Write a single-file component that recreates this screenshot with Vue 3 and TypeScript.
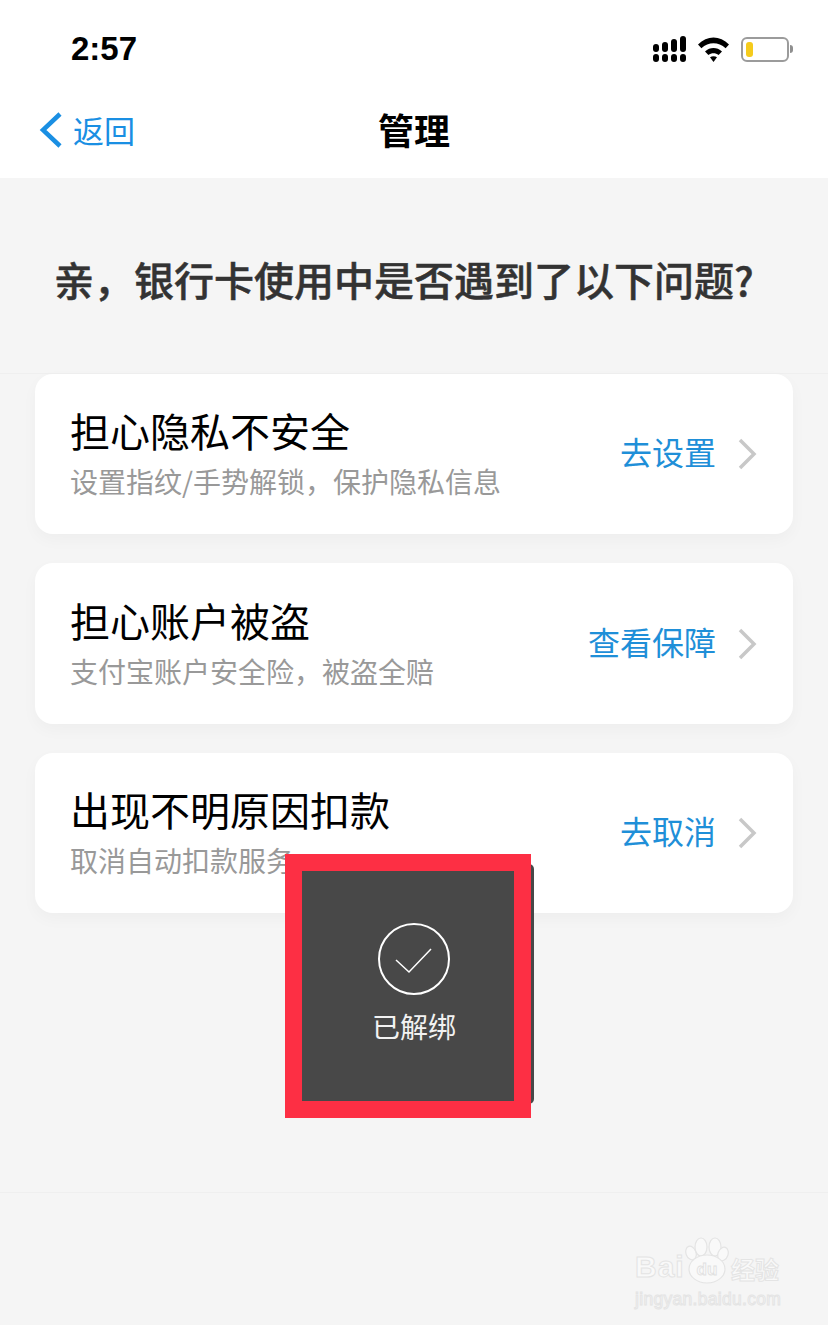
<script setup lang="ts">
const items = [
  { title: '担心隐私不安全', desc: '设置指纹/手势解锁，保护隐私信息', action: '去设置' },
  { title: '担心账户被盗', desc: '支付宝账户安全险，被盗全赔', action: '查看保障' },
  { title: '出现不明原因扣款', desc: '取消自动扣款服务', action: '去取消' },
]
const signalBars = [8, 10, 13, 16]
</script>

<template>
  <div class="page">
    <header class="top">
      <div class="status">
        <span class="time">2:57</span>
        <div class="status-icons">
          <div class="signal">
            <div v-for="h in signalBars" :key="h" class="signal-col">
              <i class="bar" :style="{ height: h + 'px' }"></i>
              <i class="dot"></i>
            </div>
          </div>
          <svg class="wifi" width="31" height="26" viewBox="0 0 31 26">
            <path d="M0 8.500C9-.8 22-.8 31 8.500l-3.400 3.700C20.500 5.500 10.500 5.500 3.400 12.200z" fill="#000" />
            <path d="M7 15.500c5-4.600 12-4.600 17 0l-3.400 3.500c-3-2.500-7.200-2.500-10.200 0z" fill="#000" />
            <path d="M12 21.300c2-1.500 5-1.500 7 0L15.500 26z" fill="#000" />
          </svg>
          <div class="battery">
            <div class="battery-body"><i class="battery-level"></i></div>
            <i class="battery-cap"></i>
          </div>
        </div>
      </div>
      <nav class="nav">
        <div class="back">
          <svg width="26" height="36" viewBox="0 0 26 36">
            <path d="M22 2 5 18l17 16" fill="none" stroke="#1a8fe3" stroke-width="4.500" />
          </svg>
          <span>返回</span>
        </div>
        <h1 class="nav-title">管理</h1>
      </nav>
    </header>

    <h2 class="heading">亲，银行卡使用中是否遇到了以下问题?</h2>

    <section class="list">
      <div v-for="item in items" :key="item.title" class="card">
        <div class="card-text">
          <div class="card-title">{{ item.title }}</div>
          <div class="card-desc">{{ item.desc }}</div>
        </div>
        <span class="card-action">{{ item.action }}</span>
        <svg class="chevron" width="20" height="32" viewBox="0 0 20 32">
          <path d="M3 2l14 14L3 30" fill="none" stroke="#c8c8c8" stroke-width="3.500" />
        </svg>
      </div>
    </section>

    <div class="footer-line"></div>

    <div class="toast-edge"></div>
    <div class="toast-mark">
      <div class="toast">
        <svg width="74" height="74" viewBox="0 0 74 74">
          <circle cx="37" cy="37" r="35" fill="none" stroke="#fff" stroke-width="2" />
          <path d="M19 38l13 12 22-23" fill="none" stroke="#fff" stroke-width="1.500" />
        </svg>
        <span class="toast-text">已解绑</span>
      </div>
    </div>

    <div class="watermark">
      <div class="wm-row">
        <span class="wm-bai">Bai</span>
        <svg class="wm-paw" width="44" height="47" viewBox="0 0 44 47">
          <g fill="#f9f9f9" stroke="#e4e4e4" stroke-width="1.200">
            <ellipse cx="6" cy="16" rx="5" ry="7" transform="rotate(-20 6 16)" />
            <ellipse cx="16" cy="10" rx="6" ry="9" />
            <ellipse cx="30" cy="10" rx="6" ry="9" />
            <ellipse cx="38" cy="17" rx="5" ry="7" transform="rotate(20 38 17)" />
            <ellipse cx="22" cy="32" rx="18" ry="14" />
          </g>
          <text x="22" y="38" text-anchor="middle" class="wm-du">du</text>
        </svg>
        <span class="wm-cn">经验</span>
      </div>
      <div class="wm-url">jingyan.baidu.com</div>
    </div>
  </div>
</template>

<style>
html,
body {
  margin: 0;
  background: #f5f5f5;
}
</style>

<style scoped>
.page {
  position: relative;
  width: 828px;
  height: 1325px;
  overflow: hidden;
  background: #f5f5f5;
  font-family: "Noto Sans CJK SC", "Liberation Sans", sans-serif;
}

.top {
  background: #fff;
  height: 178px;
}

.status {
  height: 90px;
  box-sizing: border-box;
  padding: 8px 35px 0 71px;
  display: flex;
  align-items: center;
  justify-content: space-between;
}

.time {
  font-family: "Liberation Sans", sans-serif;
  font-size: 33px;
  font-weight: 700;
  color: #000;
}

.status-icons {
  display: flex;
  align-items: center;
  gap: 12px;
}

.signal {
  display: flex;
  align-items: flex-end;
  gap: 3px;
}

.signal-col {
  display: flex;
  flex-direction: column;
  gap: 2px;
  width: 6px;
}

.bar {
  display: block;
  background: #000;
  border-radius: 3px;
}

.dot {
  display: block;
  height: 8px;
  background: #000;
  border-radius: 3px;
}

.battery {
  display: flex;
  align-items: center;
}

.battery-body {
  width: 48px;
  height: 25px;
  box-sizing: border-box;
  border: 2px solid #9b9b9b;
  border-radius: 6px;
  padding: 3px;
}

.battery-level {
  display: block;
  width: 7px;
  height: 100%;
  background: #f5cb1c;
  border-radius: 3px;
}

.battery-cap {
  width: 3px;
  height: 8px;
  margin-left: 1px;
  background: #8f8f8f;
  border-radius: 0 3px 3px 0;
}

.nav {
  position: relative;
  height: 88px;
  display: flex;
  align-items: center;
  justify-content: center;
}

.back {
  position: absolute;
  left: 38px;
  top: 18px;
  display: flex;
  align-items: center;
  gap: 9px;
  color: #1a8fe3;
  font-size: 31px;
  line-height: 44px;
}

.nav-title {
  margin: 0 0 10px;
  font-size: 36px;
  font-weight: 700;
  color: #000;
}

.heading {
  margin: 0;
  height: 196px;
  box-sizing: border-box;
  padding: 74px 0 0 54px;
  font-size: 40px;
  line-height: 54px;
  font-weight: 500;
  color: #333;
  -webkit-text-stroke: 0.5px #333;
  border-bottom: 1px solid #efefef;
  white-space: nowrap;
}

.list {
  display: flex;
  flex-direction: column;
  gap: 29px;
  margin: 0 35px;
}

.card {
  height: 160px;
  display: flex;
  align-items: center;
  padding: 0 36px 0 35px;
  background: #fff;
  border-radius: 18px;
  box-shadow: 0 6px 16px rgba(0, 0, 0, 0.03);
}

.card:nth-child(2) {
  height: 161px;
}

.card-text {
  flex: 1;
  padding-bottom: 7px;
}

.card-title {
  font-size: 40px;
  line-height: 56px;
  margin-bottom: 5px;
  color: #000;
}

.card-desc {
  font-size: 28px;
  line-height: 36px;
  color: #999;
}

.card-action {
  font-size: 32px;
  color: #1f8fd8;
  margin: 0 21px 6px 0;
}

.chevron {
  margin-bottom: 0;
}

.toast-mark {
  position: absolute;
  left: 285px;
  top: 854px;
  width: 212px;
  height: 230px;
  border: 17px solid #fd2f44;
  background: #484848;
}

.toast {
  height: 100%;
  box-sizing: border-box;
  padding: 51px 0 0 12px;
  display: flex;
  flex-direction: column;
  align-items: center;
}

.toast-text {
  margin-top: 10px;
  font-size: 28px;
  color: #f2f2f2;
}

.toast-edge {
  position: absolute;
  left: 494px;
  top: 864px;
  width: 40px;
  height: 240px;
  background: #484848;
  border-radius: 5px;
}

.footer-line {
  position: absolute;
  left: 0;
  right: 0;
  top: 1192px;
  height: 1px;
  background: #efefef;
}

.watermark {
  position: absolute;
  left: 635px;
  top: 1237px;
  color: #f9f9f9;
  -webkit-text-stroke: 1px #e4e4e4;
}

.wm-row {
  display: flex;
  align-items: flex-end;
  height: 47px;
}

.wm-bai {
  width: 50px;
  font-family: "Liberation Sans", sans-serif;
  font-size: 30px;
  font-weight: 700;
  line-height: 34px;
  letter-spacing: 1px;
}

.wm-paw {
  flex: none;
}

.wm-du {
  font-family: "Liberation Sans", sans-serif;
  font-size: 17px;
  font-weight: 700;
  fill: #f9f9f9;
  stroke: #e0e0e0;
  stroke-width: 0.8px;
}

.wm-cn {
  margin-left: 2px;
  font-size: 24px;
  font-weight: 700;
  line-height: 30px;
}

.wm-url {
  margin-top: 4px;
  font-family: "Liberation Sans", sans-serif;
  font-size: 17.500px;
  line-height: 22px;
  letter-spacing: 0.3px;
  white-space: nowrap;
}
</style>
